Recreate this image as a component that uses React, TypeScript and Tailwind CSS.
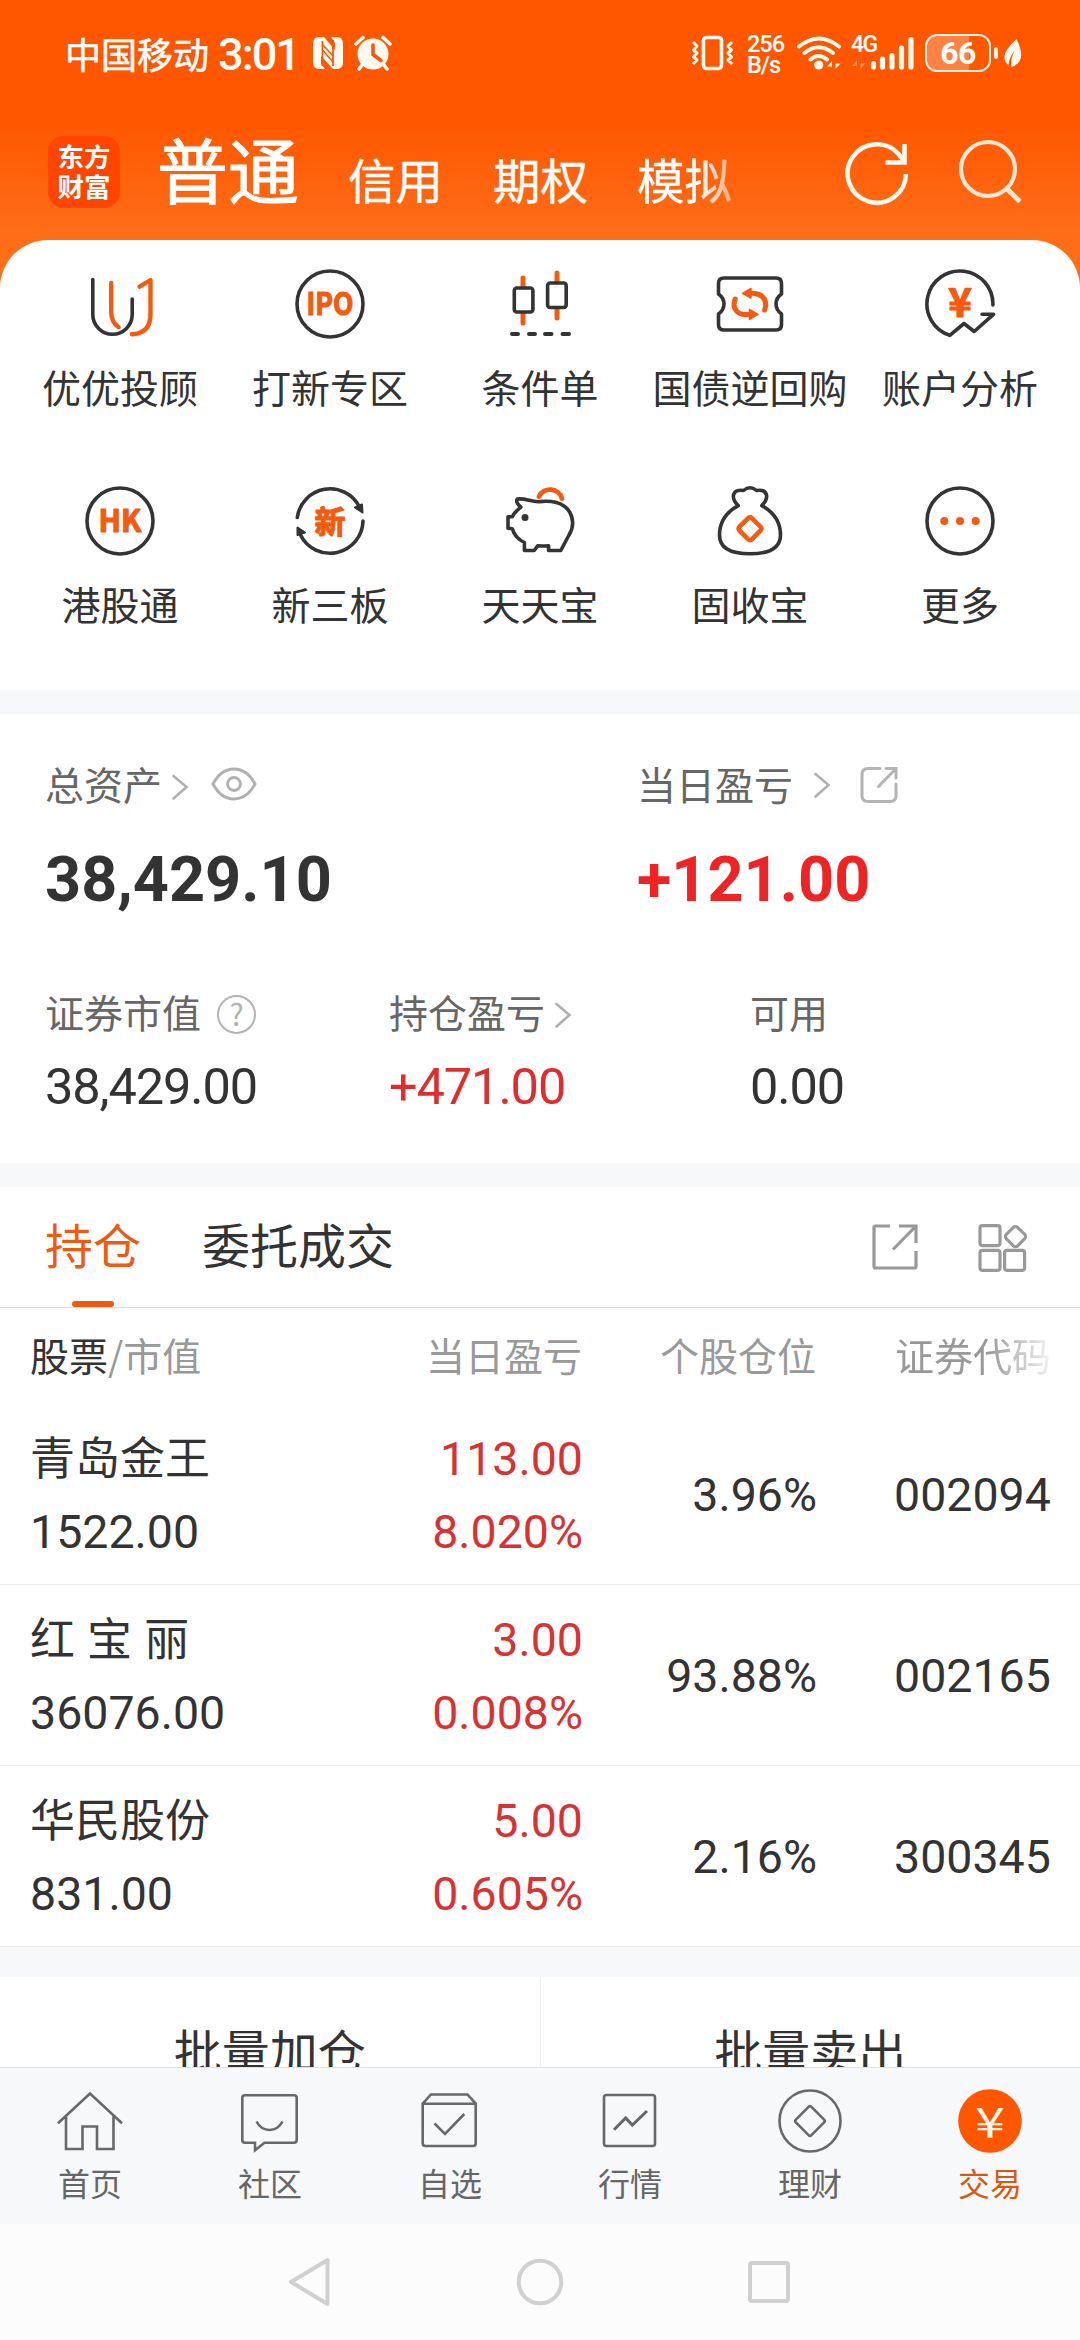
import type { ReactNode } from "react";

const DARK = "#343434";
const ORANGE = "#f55a0f";

interface Holding {
  name: string;
  value: string;
  profit: string;
  rate: string;
  ratio: string;
  code: string;
}

const holdings: Holding[] = [
  { name: "青岛金王", value: "1522.00", profit: "113.00", rate: "8.020%", ratio: "3.96%", code: "002094" },
  { name: "红 宝 丽", value: "36076.00", profit: "3.00", rate: "0.008%", ratio: "93.88%", code: "002165" },
  { name: "华民股份", value: "831.00", profit: "5.00", rate: "0.605%", ratio: "2.16%", code: "300345" },
];

function MenuIcon({ children }: { children: ReactNode }) {
  return (
    <svg
      width="72"
      height="72"
      viewBox="0 0 72 72"
      fill="none"
      stroke={DARK}
      strokeWidth="3.6"
      strokeLinecap="round"
      strokeLinejoin="round"
    >
      {children}
    </svg>
  );
}

function IconText({ children, size, y, width }: { children: string; size: number; y: number; width?: number }) {
  return (
    <text
      x="36"
      y={y}
      textAnchor="middle"
      fontSize={size}
      fontWeight="700"
      textLength={width}
      lengthAdjust="spacingAndGlyphs"
      fill={ORANGE}
      stroke={ORANGE}
      strokeWidth="1.2"
    >
      {children}
    </text>
  );
}

const menu: { label: string; icon: ReactNode }[] = [
  {
    label: "优优投顾",
    icon: (
      <MenuIcon>
        <path d="M8.8 11.5V46.6a19.7 19.7 0 0 0 39.4 0V31" />
        <path d="M27.2 15V44q0 10 7.4 15.3M55.5 18.7l11-6.5V46q0 19.5-18.6 20.3" stroke={ORANGE} strokeWidth="4.4" />
      </MenuIcon>
    ),
  },
  {
    label: "打新专区",
    icon: (
      <MenuIcon>
        <circle cx="36" cy="36" r="33" />
        <IconText size={31} y={47} width={47}>IPO</IconText>
      </MenuIcon>
    ),
  },
  {
    label: "条件单",
    icon: (
      <MenuIcon>
        <path d="M19 10v9M19 46v9M53 5v9M53 41v9" stroke={ORANGE} strokeWidth="5" />
        <rect x="10.3" y="20" width="18.6" height="24" rx="2.5" />
        <rect x="43.6" y="15" width="18.6" height="24.5" rx="2.5" />
        <path d="M8 66h6M25 66h6M41 66h6.5M58.5 66h6.5" strokeWidth="4" />
      </MenuIcon>
    ),
  },
  {
    label: "国债逆回购",
    icon: (
      <MenuIcon>
        <path d="M10 10h52q5.5 0 5.5 5.5V26q-5.5 4-5.5 10t5.5 10v10.5q0 5.500-5.500 5.500H10q-5.500 0-5.500-5.500V46q5.500-4 5.500-10T4.500 26V15.500Q4.500 10 10 10z" />
        <path d="M34 25.300h5q13 1 12.800 12.200l-1.200 4.500M21.200 31q-3 7.500 1.500 12.200 3.500 3.300 8 3.300h6" stroke={ORANGE} strokeWidth="5" />
        <path d="M28.500 25.300l8.500-4.800v9.600zM44 46.400l-8.500-5v10z" fill={ORANGE} stroke={ORANGE} strokeWidth="1.5" />
      </MenuIcon>
    ),
  },
  {
    label: "账户分析",
    icon: (
      <MenuIcon>
        <path d="M68.900 37A33 33 0 1 0 25.800 67.400L40 55.500l10.200 8L69.500 46.300H58" />
        <IconText size={40} y={48.5}>¥</IconText>
      </MenuIcon>
    ),
  },
  {
    label: "港股通",
    icon: (
      <MenuIcon>
        <circle cx="36" cy="36" r="33" />
        <IconText size={31} y={47} width={43}>HK</IconText>
      </MenuIcon>
    ),
  },
  {
    label: "新三板",
    icon: (
      <MenuIcon>
        <path d="M3.300 32.500A33 33 0 0 1 65.500 22M69 36A33 33 0 0 1 6.500 50" />
        <path d="M61 22.500l7-3 .5 8zM3.500 50V42.500l7.500 5z" fill={DARK} strokeWidth="2" />
        <IconText size={31} y={47.5}>新</IconText>
      </MenuIcon>
    ),
  },
  {
    label: "天天宝",
    icon: (
      <MenuIcon>
        <path d="M36 16.600C28 17.600 22 13 13.500 14q-2.500 3 3.300 8.200L12.500 26Q9.500 29 8.300 31.800H4v11.400l4.300.5Q11 53 20.400 57.500v8h9.800l3.500-4.600q5 .3 10.900-.2v4.800h12.200L65 50q3.700-6 3.700-12C68 24 58 14.500 36 16.600z" />
        <circle cx="21" cy="32.5" r="3.5" fill={DARK} stroke="none" />
        <path d="M35 11.500a12.400 12.400 0 0 1 23 2" stroke={ORANGE} strokeWidth="4.8" />
      </MenuIcon>
    ),
  },
  {
    label: "固收宝",
    icon: (
      <MenuIcon>
        <path d="M24.200 20.600Q18.500 15 19.500 10q1.500-6 10-4.500 6.500-5.500 13 0 8.500-1.500 10 4.500 1 5-4.700 10.600Q66.500 31 66.500 50 66.500 68.800 36 68.800T5.500 50Q5.500 31 24.200 20.600z" />
        <rect x="27.2" y="34.9" width="17.6" height="17.6" rx="2.5" transform="rotate(45 36 43.7)" stroke={ORANGE} strokeWidth="4.6" />
      </MenuIcon>
    ),
  },
  {
    label: "更多",
    icon: (
      <MenuIcon>
        <circle cx="36" cy="36" r="33" />
        <g fill={ORANGE} stroke="none">
          <circle cx="20.3" cy="36" r="4" />
          <circle cx="36" cy="36" r="4" />
          <circle cx="51.7" cy="36" r="4" />
        </g>
      </MenuIcon>
    ),
  },
];

function TabIcon({ children }: { children: ReactNode }) {
  return (
    <svg width="66" height="66" viewBox="0 0 66 66" fill="none" stroke="#686868" strokeWidth="2.6">
      {children}
    </svg>
  );
}

const tabs: { label: string; icon: ReactNode; active?: boolean }[] = [
  {
    label: "首页",
    icon: (
      <TabIcon>
        <path d="M1 35.300L33 5.500l32 29.800M9 28.500V61h16.500V38.500h14.500V61h16.500V28.500" />
      </TabIcon>
    ),
  },
  {
    label: "社区",
    icon: (
      <TabIcon>
        <path d="M8 7.300h49q2.700 0 2.700 2.700v42q0 2.700-2.700 2.700H27.500l-9.500 7.500V54.700H8q-2.700 0-2.700-2.700V10q0-2.700 2.700-2.700zM19.500 33.500q4.500 8.500 13 8.500t13-8.500" />
      </TabIcon>
    ),
  },
  {
    label: "自选",
    icon: (
      <TabIcon>
        <path d="M5.700 15.700h53v39.600q0 2.700-2.700 2.700H8.400q-2.700 0-2.700-2.700zL14 6.500h36.500l8.200 9.200M17.500 35.500L28 46l19.300-20" />
      </TabIcon>
    ),
  },
  {
    label: "行情",
    icon: (
      <TabIcon>
        <rect x="7" y="7" width="51" height="51" rx="2.5" />
        <path d="M17 41.800L28.700 30l6.600 7L50 23" strokeWidth="3" />
      </TabIcon>
    ),
  },
  {
    label: "理财",
    icon: (
      <TabIcon>
        <circle cx="33" cy="33" r="30.5" />
        <rect x="22" y="22" width="22" height="22" rx="2" transform="rotate(45 33 33)" />
      </TabIcon>
    ),
  },
  {
    label: "交易",
    active: true,
    icon: (
      <TabIcon>
        <circle cx="33" cy="33" r="31.8" fill="#ff5700" stroke="none" />
        <text x="33" y="49.5" textAnchor="middle" fontSize="42" textLength="30" lengthAdjust="spacingAndGlyphs" fill="#fff3ea" stroke="none">
          ¥
        </text>
      </TabIcon>
    ),
  },
];

function Chevron({ className }: { className?: string }) {
  return (
    <svg className={className} width="18" height="28" viewBox="0 0 18 28" fill="none" stroke="#b0b0b0" strokeWidth="2.6" strokeLinecap="round">
      <path d="M2.500 3L15.500 14 2.500 25.500" />
    </svg>
  );
}

function StatusBar() {
  return (
    <div className="flex h-[106px] items-center pl-[65px] pr-[58px] text-white">
      <span className="text-[36px] leading-[48px] [-webkit-text-stroke:0.6px_white]">中国移动</span>
      <span className="mt-[4px] ml-[9px] font-['Roboto',sans-serif] text-[45px] leading-[48px] font-medium tracking-[-1.9px]">3:01</span>
      <svg className="ml-[13px]" width="32" height="34" viewBox="0 0 32 34">
        <path d="M7 1h5l11 13V7l-4-6h6q6 0 6 7v18q0 7-6 7h-4L9 20v8l4 5H7q-6 0-6-7V8q0-7 6-7z" fill="#fffaf0" />
        <path d="M10.500 5v25M21 4v26" stroke="#ff5600" strokeWidth="1.8" />
        <path d="M11 9l10 11M11 14.500L21 26" stroke="#ff5600" strokeWidth="1.5" />
      </svg>
      <svg className="ml-[10px]" width="38" height="36" viewBox="0 0 38 36">
        <circle cx="19" cy="19" r="15.5" fill="#fffaf0" />
        <path d="M2 9l7-6.500M36 9l-7-6.500M8 30l-3 4M30 30l3 4" stroke="#fffaf0" strokeWidth="3.6" strokeLinecap="round" />
        <path d="M19 10v9.500l8 6" fill="none" stroke="#ff5600" strokeWidth="3.6" strokeLinecap="round" />
      </svg>

      <div className="ml-auto flex items-center font-['Roboto',sans-serif]">
        <svg width="43" height="36" viewBox="0 0 43 36" fill="none" stroke="#fffaf0" strokeWidth="3.6" strokeLinejoin="round">
          <rect x="12.5" y="2.5" width="18" height="31" rx="3" />
          <path d="M2 7l4 4-3.500 4L6 18l-3.500 4L6 25l-4 4M41 7l-4 4 3.500 4L37 18l3.500 4L37 25l4 4" strokeWidth="3" />
        </svg>
        <div className="mt-[3px] ml-[13px] w-[38px] text-[23.5px] leading-[21px] font-medium tracking-[-1px]">
          <div>256</div>
          <div>B/s</div>
        </div>
        <svg className="ml-[11px]" width="46" height="36" viewBox="0 0 46 36" fill="none" stroke="#fffaf0" strokeWidth="4" strokeLinecap="round">
          <path d="M3 11.500q20-16 40 0M8.500 18q14-11.500 28.500 0M14.500 24.500q8-7 16.500 0" />
          <circle cx="22.7" cy="30" r="4.6" fill="#fffaf0" stroke="none" />
          <path d="M36 34v-8l-5 5.500h5M39.500 26v8l5-5.500h-5" fill="#fffaf0" stroke="none" />
        </svg>
        <div className="relative ml-[9px] h-[36px] w-[64px]">
          <span className="absolute left-0 top-[-3px] text-[23px] leading-[26px] font-medium tracking-[-1.5px]">4G</span>
          <svg width="64" height="36" viewBox="0 0 64 36" stroke="#fffaf0" strokeWidth="5.2" strokeLinecap="round">
            <path d="M22.500 28.500V32M31.500 24v8M41 20.500V32M50.500 13v19M60 4.500V32" />
            <path d="M6 34v-9l-5 6h5M9.500 25v9l5-6h-5" fill="#ff9257" stroke="none" />
          </svg>
        </div>
        <div className="ml-[10px] flex items-center">
          <div className="flex h-[38px] w-[66px] items-center justify-center rounded-[12px] border-[2.6px] border-[#fff3e4] bg-linear-to-r from-[#ff8243] from-68% to-transparent to-68%">
            <span className="text-[32px] leading-[30px] font-bold tracking-[-0.5px]">66</span>
          </div>
          <div className="ml-[3px] h-[12px] w-[4px] rounded-full bg-[#fff3e4]" />
          <svg className="ml-[6px]" width="18" height="30" viewBox="0 0 18 30">
            <path d="M12.500 1Q21 18 14 25q-3 3-6.500 4Q6 21 11 12.500 5 19 4.500 27 0 24 .5 17.500 1 12 12.500 1z" fill="#fffaf0" />
          </svg>
        </div>
      </div>
    </div>
  );
}

function AccountNav() {
  return (
    <div className="flex items-start pl-[48px] pr-[57px] pt-[30px] text-white">
      <div className="flex size-[72px] flex-col items-center justify-center rounded-[16px] bg-[#ff4500] pb-[2px] text-[26.5px] leading-[30px] font-bold">
        <span>东方</span>
        <span>财富</span>
      </div>
      <span className="-mt-[14px] ml-[37px] text-[71px] leading-[90px] [-webkit-text-stroke:1px_white]">普通</span>
      <span className="mt-[13px] ml-[49px] text-[47.5px] leading-[60px] [-webkit-text-stroke:0.4px_white]">信用</span>
      <span className="mt-[13px] ml-[50px] text-[47.5px] leading-[60px] [-webkit-text-stroke:0.4px_white]">期权</span>
      <span className="mt-[13px] ml-[49px] mask-r-from-65% mask-r-to-130% text-[47.5px] leading-[60px] [-webkit-text-stroke:0.4px_white]">模拟</span>
      <svg className="mt-[3px] ml-auto" width="66" height="68" viewBox="0 0 66 68" fill="none" stroke="#fff8ee" strokeWidth="4.6">
        <path d="M62 35A29.200 29.200 0 1 1 55 15.500L61 23" />
        <path d="M60.500 5v18.500H41.500" />
      </svg>
      <svg className="ml-[47px]" width="66" height="70" viewBox="0 0 66 70" fill="none" stroke="#ffe7d4" strokeWidth="4.2">
        <circle cx="31" cy="33" r="27" />
        <path d="M49 52l14 13.500" strokeWidth="5" />
      </svg>
    </div>
  );
}

function QuickMenu() {
  return (
    <div className="grid h-[450px] grid-cols-5 content-start gap-y-[75px] rounded-t-[48px] bg-white px-[15px] pt-[28px]">
      {menu.map((item) => (
        <div key={item.label} className="flex flex-col items-center">
          {item.icon}
          <span className="mt-[22px] text-[39px] leading-[48px] whitespace-nowrap text-[#333]">{item.label}</span>
        </div>
      ))}
    </div>
  );
}

function AssetSummary() {
  return (
    <div className="h-[449px] bg-white pl-[45px] pt-[45px] text-[#333]">
      <div className="flex">
        <div className="w-[592px]">
          <div className="flex h-[48px] items-center text-[39px] leading-[48px] text-[#666]">
            总资产
            <Chevron className="mt-[8px] ml-[9px]" />
            <svg className="ml-[22px] mt-[2px]" width="46" height="34" viewBox="0 0 46 34" fill="none" stroke="#b0b0b0" strokeWidth="2.8">
              <path d="M2 17Q10 2 23 2t21 15Q36 32 23 32T2 17z" />
              <circle cx="23" cy="17" r="6.5" />
            </svg>
          </div>
          <div className="mt-[37px] font-['Roboto',sans-serif] text-[63px] leading-[72px] font-bold">38,429.10</div>
        </div>
        <div>
          <div className="flex h-[48px] items-center text-[39px] leading-[48px] text-[#666]">
            当日盈亏
            <Chevron className="mt-[4px] ml-[20px]" />
            <svg className="mt-[4px] ml-[28px]" width="40" height="40" viewBox="0 0 40 40" fill="none" stroke="#b4b4b4" strokeWidth="3">
              <path d="M21 3.500H9Q3 3.500 3 9.500v21q0 6 6 6h22q6 0 6-6V19M27 3.500h10V13M37 3.500L19.500 21.500" strokeLinecap="round" />
            </svg>
          </div>
          <div className="mt-[37px] font-['Roboto',sans-serif] text-[63px] leading-[72px] font-bold text-[#ee2323]">+121.00</div>
        </div>
      </div>

      <div className="mt-[71px] flex">
        <div className="w-[344px]">
          <div className="flex h-[48px] items-center text-[39px] leading-[48px] text-[#666]">
            证券市值
            <span className="mt-[6px] ml-[16px] flex size-[39px] items-center justify-center rounded-full border-[2.6px] border-[#b4b4b4] pb-[3px] text-[30px] leading-[30px] text-[#b0b0b0]">
              ?
            </span>
          </div>
          <div className="mt-[22px] font-['Roboto',sans-serif] text-[50.5px] leading-[60px] tracking-[-1.1px]">38,429.00</div>
        </div>
        <div className="w-[361px]">
          <div className="flex h-[48px] items-center text-[39px] leading-[48px] text-[#666]">
            持仓盈亏
            <Chevron className="mt-[7px] ml-[9px]" />
          </div>
          <div className="mt-[22px] font-['Roboto',sans-serif] text-[50.5px] leading-[60px] tracking-[-1.1px] text-[#e02c2c]">+471.00</div>
        </div>
        <div>
          <div className="text-[39px] leading-[48px] text-[#666]">可用</div>
          <div className="mt-[22px] font-['Roboto',sans-serif] text-[50.5px] leading-[60px] tracking-[-1.1px]">0.00</div>
        </div>
      </div>
    </div>
  );
}

function Holdings() {
  return (
    <div className="bg-white text-[#333]">
      <div className="flex h-[121px] items-start border-b border-[#dcdcdc] pl-[45px] pr-[51px] pt-[20px] text-[48px] leading-[72px]">
        <div className="flex flex-col items-center text-[#ee5a10]">
          持仓
          <div className="mt-[22px] h-[6px] w-[42px] rounded-full bg-[#ee5a10]" />
        </div>
        <span className="ml-[61px]">委托成交</span>
        <svg className="mt-[15px] ml-auto" width="50" height="50" viewBox="0 0 50 50" fill="none" stroke="#999" strokeWidth="3.2">
          <path d="M20 4H5.500Q4 4 4 5.500v39Q4 46 5.500 46h39q1.500 0 1.500-1.500V29M29 4h17v17M46 4L23 27.500" />
        </svg>
        <svg className="mt-[15px] ml-[57px]" width="52" height="52" viewBox="0 0 52 52" fill="none" stroke="#999" strokeWidth="3.2">
          <rect x="3" y="3.6" width="20" height="20" rx="2.5" />
          <rect x="3" y="28.3" width="20" height="20" rx="2.5" />
          <rect x="27.6" y="28.3" width="20" height="20" rx="2.5" />
          <rect x="30.5" y="6.6" width="16" height="16" rx="3" transform="rotate(45 38.5 14.6)" />
        </svg>
      </div>

      <div className="flex h-[96px] items-center pb-[4px] pl-[30px] text-[39px] leading-[48px] text-[#999]">
        <div className="w-[301px]">
          <span className="text-[#333]">股票</span>/市值
        </div>
        <div className="w-[251px] text-right">当日盈亏</div>
        <div className="w-[234px] text-right">个股仓位</div>
        <div className="ml-[79px] mask-r-from-60% mask-r-to-105%">证券代码</div>
      </div>

      {holdings.map((h) => (
        <div
          key={h.code}
          className="flex h-[181px] border-b border-[#ececee] pl-[30px] pt-[15px] font-['Roboto',sans-serif] text-[46.5px] leading-[73px]"
        >
          <div className="w-[302px]">
            <div className="font-['Noto_Sans_CJK_SC',sans-serif] text-[45px] [word-spacing:2px]">{h.name}</div>
            <div className="mt-[4px]">{h.value}</div>
          </div>
          <div className="w-[251px] pt-[4px] text-right text-[#d93232]">
            <div>{h.profit}</div>
            <div>{h.rate}</div>
          </div>
          <div className="w-[234px] pt-[40px] text-right">{h.ratio}</div>
          <div className="ml-[77px] pt-[40px]">{h.code}</div>
        </div>
      ))}
    </div>
  );
}

function BatchActions() {
  return (
    <div className="flex h-[90px] overflow-hidden bg-white text-center text-[48px] leading-[144px] text-[#333]">
      <div className="flex-1 border-r border-[#ececee]">批量加仓</div>
      <div className="flex-1">批量卖出</div>
    </div>
  );
}

function TabBar() {
  return (
    <div className="grid h-[157px] grid-cols-6 border-t border-[#dfe0e3] bg-[#f7f8fa] pt-[20px]">
      {tabs.map((tab) => (
        <div key={tab.label} className="flex flex-col items-center">
          {tab.icon}
          <span className={`mt-[8px] text-[32px] leading-[40px] ${tab.active ? "text-[#d9590f]" : "text-[#666]"}`}>
            {tab.label}
          </span>
        </div>
      ))}
    </div>
  );
}

function SystemNav() {
  return (
    <div className="flex h-[116px] items-center justify-center gap-[181px] bg-[#fcfcfc]">
      <svg width="48" height="52" viewBox="0 0 48 52" fill="none" stroke="#d0d0d0" strokeWidth="4" strokeLinejoin="round">
        <path d="M4 26L40.500 4v44z" />
      </svg>
      <svg width="48" height="48" viewBox="0 0 48 48" fill="none" stroke="#d0d0d0" strokeWidth="4">
        <circle cx="24" cy="24" r="21.3" />
      </svg>
      <svg width="48" height="48" viewBox="0 0 48 48" fill="none" stroke="#d0d0d0" strokeWidth="4">
        <rect x="5" y="5" width="38" height="38" rx="2" />
      </svg>
    </div>
  );
}

export default function App() {
  return (
    <div className="h-[2340px] w-[1080px] overflow-hidden bg-[#f7f8fa] font-['Noto_Sans_CJK_SC','Noto_Sans',sans-serif]">
      <div className="bg-[#ff6e17]">
        <div className="h-[240px] bg-linear-to-b from-[#ff5600] from-50% to-[#ff6e17]">
          <StatusBar />
          <AccountNav />
        </div>
        <QuickMenu />
      </div>
      <div className="h-[24px]" />
      <AssetSummary />
      <div className="h-[24px]" />
      <Holdings />
      <div className="h-[30px]" />
      <BatchActions />
      <TabBar />
      <SystemNav />
    </div>
  );
}
